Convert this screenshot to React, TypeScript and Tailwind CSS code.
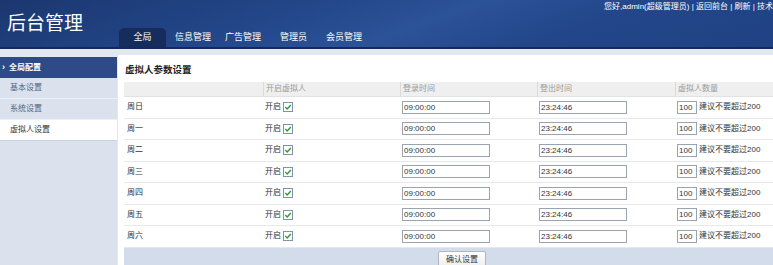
import React from "react"

const days = ["周日", "周一", "周二", "周三", "周四", "周五", "周六"]

const tabs = [
  { label: "信息管理", ml: "ml-[9px]" },
  { label: "广告管理", ml: "ml-[14px]" },
  { label: "管理员", ml: "ml-[19px]" },
  { label: "会员管理", ml: "ml-[19px]" },
]

function Check() {
  return (
    <svg width="10" height="10" viewBox="0 0 10 10" className="block">
      <rect x="0.5" y="0.5" width="9" height="9" fill="#fff" stroke="#8091a8" />
      <path d="M2.3 5.1 L4.2 7 L7.8 3" fill="none" stroke="#2f9a2f" strokeWidth="1.4" />
    </svg>
  )
}

function TextBox({ value, w }: { value: string; w: string }) {
  return (
    <input
      readOnly
      value={value}
      className={`${w} h-[13px] border border-[#9aa4b1] bg-white px-[1px] text-[8px] leading-[11px] text-[#333] outline-none`}
    />
  )
}

export default function App() {
  return (
    <div className="w-[773px] h-[265px] overflow-hidden bg-[#e2e8f0] font-['Liberation_Sans','Noto_Sans_CJK_SC',sans-serif]">
      <div className="w-[806px]">
        {/* top bar */}
        <header className="flex h-[49px] border-b-2 border-[#15295a] bg-[linear-gradient(160deg,#1b376f_0%,#23478a_35%,#2c5297_52%,#23468a_70%,#1f4184_100%)]">
          <div className="w-[119px] pl-[7px] pt-[9px] text-[19px] leading-[26px] text-white font-['Noto_Sans_CJK_SC',sans-serif]">
            后台管理
          </div>
          <div className="flex flex-1 flex-col">
            <div className="flex h-[14px] items-center justify-end pr-[33px] text-[8px] text-white whitespace-nowrap">
              您好,admin(超级管理员) | 返回前台 | 刷新 | 技术
            </div>
            <div className="flex-1" />
            <nav className="flex h-[19px] items-stretch text-[9px] text-white">
              <div className="flex w-[47px] items-center justify-center rounded-t-[5px] bg-[#152c5c]">全局</div>
              {tabs.map((t) => (
                <div key={t.label} className={`flex items-center ${t.ml}`}>
                  {t.label}
                </div>
              ))}
            </nav>
          </div>
        </header>

        <div className="flex pt-[6px]">
          {/* sidebar */}
          <aside className="mt-[2px] h-[210px] w-[117px] bg-[#dbe2ed] text-[8px]">
            <div className="flex h-[21px] items-center bg-[#2e4b87] pl-[2px] font-bold text-white">
              <span className="w-[7px] text-[9px]">›</span>
              全局配置
            </div>
            <div className="flex h-[21px] items-center border-b border-[#eef2f8] pl-[10px] text-[#58647a]">基本设置</div>
            <div className="flex h-[21px] items-center border-b border-[#eef2f8] pl-[10px] text-[#58647a]">系统设置</div>
            <div className="flex h-[21px] items-center border-b border-[#c9d2e0] bg-white pl-[10px] text-[#333]">虚拟人设置</div>
          </aside>

          {/* content */}
          <main className="ml-[1px] h-[210px] flex-1 bg-white px-[6px]">
            <div className="flex h-[27px] items-center pt-[3px] pl-[1px] text-[9.5px] font-bold text-[#222]">虚拟人参数设置</div>

            <div className="grid h-[15px] grid-cols-[139px_137px_137px_138px_1fr] border-b border-[#e2e2e2] bg-[#efefef] text-[8px] text-[#9a9a9a]">
              <div />
              <div className="flex items-center border-l border-[#dadada] pl-[2px]">开启虚拟人</div>
              <div className="flex items-center border-l border-[#dadada] pl-[2px]">登录时间</div>
              <div className="flex items-center border-l border-[#dadada] pl-[2px]">登出时间</div>
              <div className="flex items-center border-l border-[#dadada] pl-[2px]">虚拟人数量</div>
            </div>

            {days.map((d) => (
              <div
                key={d}
                className="grid h-[21.5px] grid-cols-[139px_137px_137px_138px_1fr] border-b border-[#e8e8e8] text-[8px] text-[#333]"
              >
                <div className="flex items-center pl-[3px]">{d}</div>
                <div className="flex items-center gap-[2px] pl-[2px]">
                  开启
                  <Check />
                </div>
                <div className="flex items-center pl-[2px]">
                  <TextBox value="09:00:00" w="w-[88px]" />
                </div>
                <div className="flex items-center pl-[2px]">
                  <TextBox value="23:24:46" w="w-[88px]" />
                </div>
                <div className="flex items-center gap-[2px] pl-[2px]">
                  <TextBox value="100" w="w-[20px]" />
                  建议不要超过200
                </div>
              </div>
            ))}

            <div className="flex h-[24px] justify-center bg-[#d3dcea] pt-[3px]">
              <button className="h-[18px] rounded-[2px] border border-[#aeb6c2] bg-[linear-gradient(#ffffff,#ececec)] px-[7px] text-[8px] text-[#333]">
                确认设置
              </button>
            </div>
          </main>
        </div>
      </div>
    </div>
  )
}
